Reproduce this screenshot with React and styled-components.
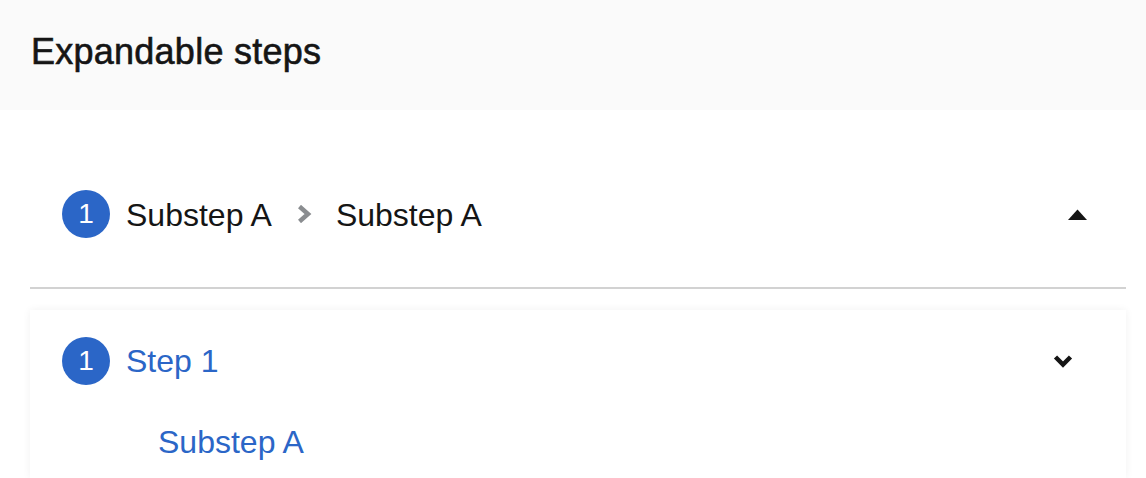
import React from "react";
import styled, { createGlobalStyle } from "styled-components";

const Global = createGlobalStyle`
  html, body { margin: 0; padding: 0; background: #ffffff; }
  body { font-family: "Liberation Sans", Arial, sans-serif; color: #151515; overflow: hidden; }
`;

const Page = styled.div`
  width: 1146px;
  height: 478px;
  display: flex;
  flex-direction: column;
`;

const Header = styled.header`
  height: 110px;
  flex-shrink: 0;
  background: #fafafa;
  display: flex;
  align-items: center;
  padding: 0 31px;
  box-sizing: border-box;
`;

const Title = styled.h1`
  margin: 0;
  font-size: 36px;
  font-weight: 400;
  letter-spacing: 0.25px;
  color: #151515;
  -webkit-text-stroke: 0.6px #151515;
  line-height: 1;
  transform: translateY(-3px);
`;

const Wizard = styled.section`
  flex: 1;
  margin: 31px 20px 0 30px;
  display: flex;
  flex-direction: column;
`;

const Toggle = styled.div`
  height: 148px;
  flex-shrink: 0;
  display: flex;
  align-items: center;
  padding: 0 39px 0 32px;
  border-bottom: 2px solid #d2d2d2;
  box-sizing: border-box;
`;

const ToggleList = styled.div`
  flex: 1;
  display: flex;
  align-items: center;
`;

const Num = styled.span`
  width: 48px;
  height: 48px;
  border-radius: 50%;
  background: #2b66c7;
  color: #fff;
  display: flex;
  align-items: center;
  justify-content: center;
  font-size: 28px;
  flex-shrink: 0;
  margin-right: 16px;
`;

const ToggleText = styled.span`
  font-size: 32px;
  color: #151515;
  line-height: 1;
  transform: translateY(1px);
`;

const Sep = styled.span`
  display: flex;
  margin: 0 24px 0 25px;
`;

const Nav = styled.nav`
  margin-top: 21px;
  flex: 1;
  box-shadow: 0 0 8px rgba(3, 3, 3, 0.06);
  padding: 27px 53px 0 32px;
  display: flex;
  flex-direction: column;
`;

const NavRow = styled.div`
  display: flex;
  align-items: center;
  height: 48px;
`;

const NavLink = styled.span`
  flex: 1;
  font-size: 32px;
  color: #2b66c7;
  line-height: 1;
`;

const SubLink = styled.span`
  margin-top: 33px;
  margin-left: 96px;
  font-size: 32px;
  color: #2b66c7;
  line-height: 48px;
`;

const CaretUp = () => (
  <svg width="19" height="11" viewBox="0 0 19 11">
    <path d="M0 11 L9.5 0.5 L19 11 Z" fill="#151515" />
  </svg>
);

const ChevronRight = () => (
  <svg width="15" height="18" viewBox="0 0 15 18">
    <polyline points="2.5,1.5 11,9 2.5,16.5" fill="none" stroke="#8a8d90" strokeWidth="4.5" strokeLinejoin="miter" />
  </svg>
);

const ChevronDown = () => (
  <svg width="20" height="14" viewBox="0 0 20 14">
    <polyline points="2.5,3 10,10.5 17.5,3" fill="none" stroke="#151515" strokeWidth="4.5" strokeLinejoin="miter" />
  </svg>
);

export default function App() {
  return (
    <Page>
      <Global />
      <Header>
        <Title>Expandable steps</Title>
      </Header>
      <Wizard>
        <Toggle>
          <ToggleList>
            <Num>1</Num>
            <ToggleText>Substep A</ToggleText>
            <Sep><ChevronRight /></Sep>
            <ToggleText>Substep A</ToggleText>
          </ToggleList>
          <CaretUp />
        </Toggle>
        <Nav>
          <NavRow>
            <Num>1</Num>
            <NavLink>Step 1</NavLink>
            <ChevronDown />
          </NavRow>
          <SubLink>Substep A</SubLink>
        </Nav>
      </Wizard>
    </Page>
  );
}
